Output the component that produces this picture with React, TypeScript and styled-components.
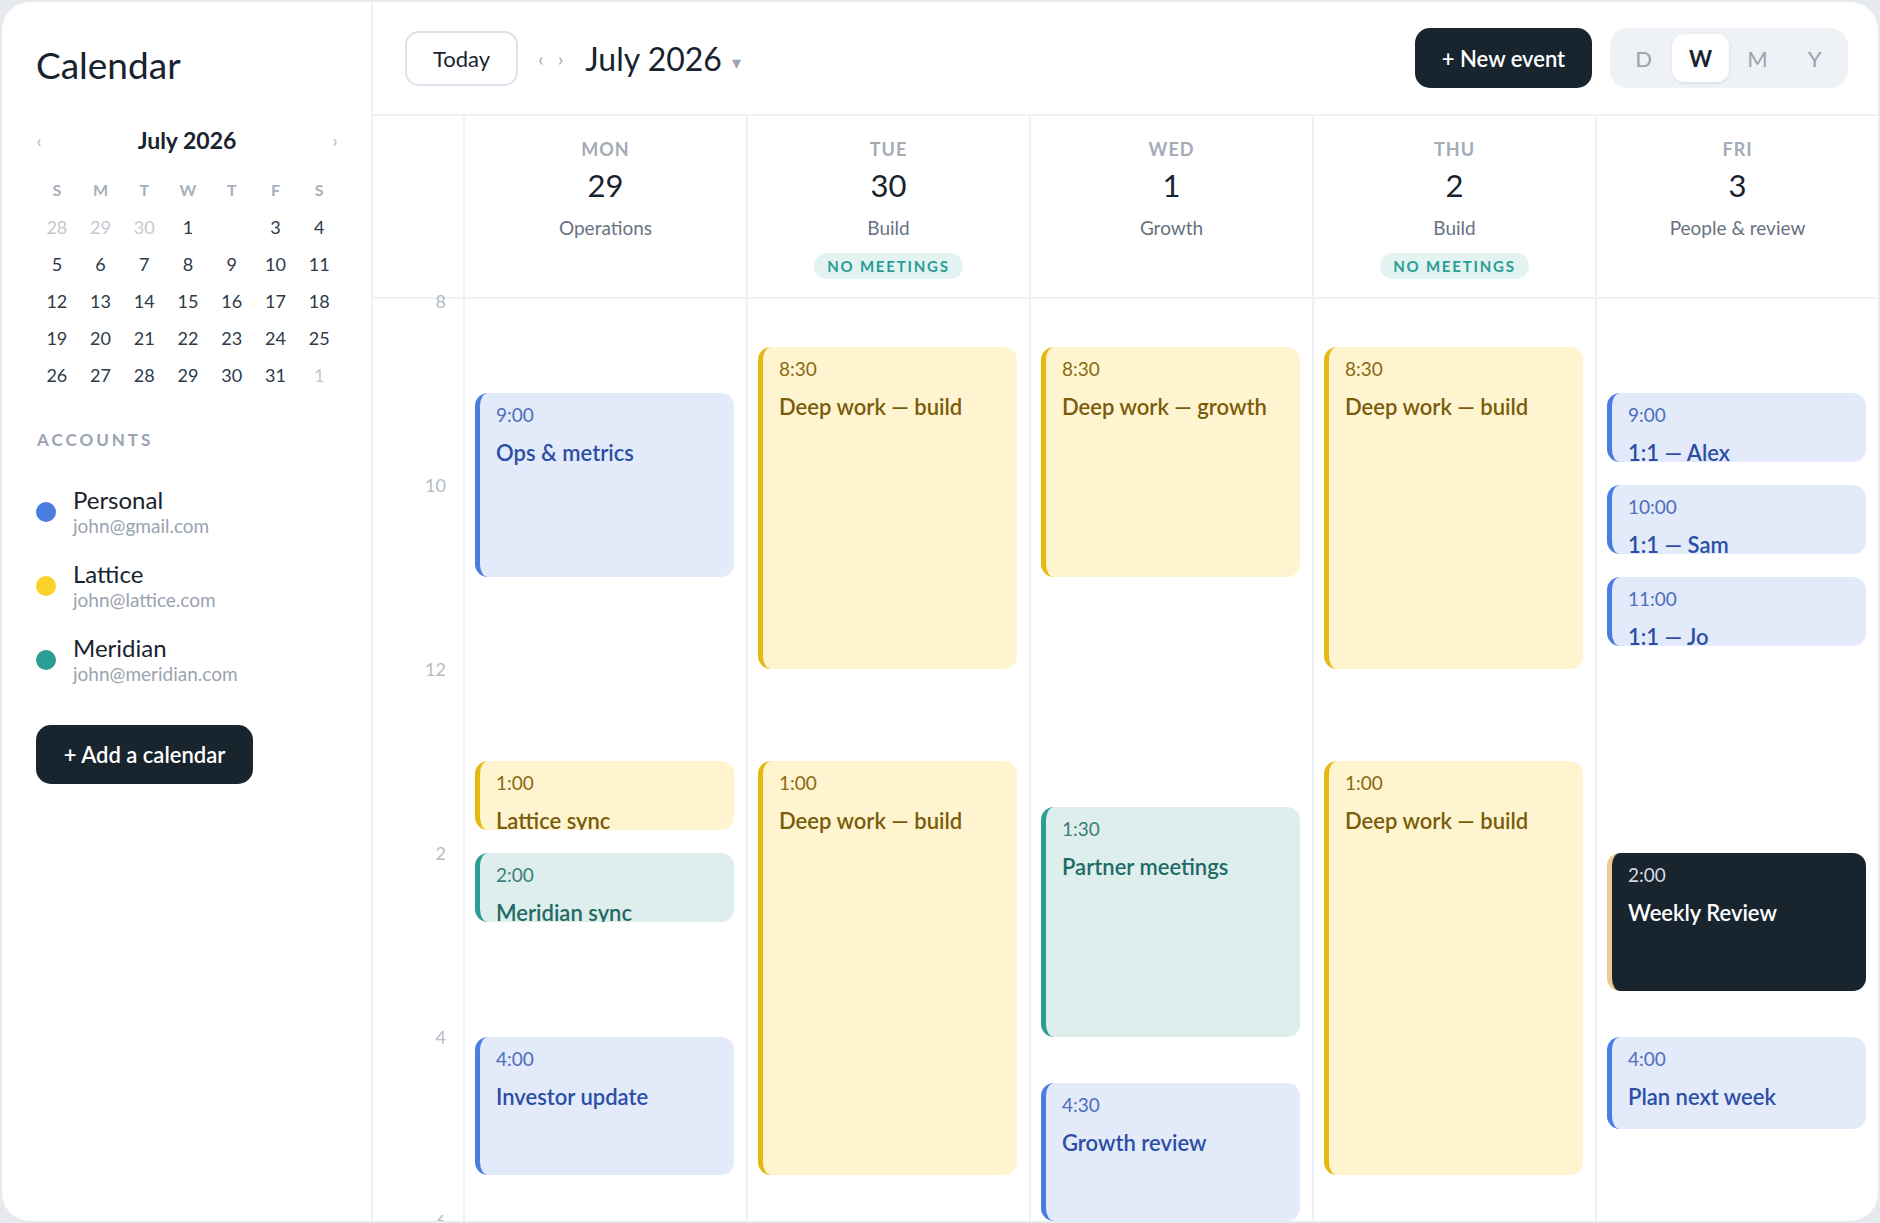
import React from "react";
import styled, { createGlobalStyle } from "styled-components";

const HOUR = 92;
const FIRST_HOUR = 8;

const GlobalStyle = createGlobalStyle`
  html, body {
    margin: 0;
    padding: 0;
    background: #e6eaef;
    font-family: "Lato", "Noto Sans", sans-serif;
    color: #1a2530;
  }
  * { box-sizing: border-box; }
`;

type Tone = "blue" | "yellow" | "teal" | "dark";

const tones: Record<Tone, { bg: string; stripe: string; time: string; title: string }> = {
  blue: { bg: "#e3eafa", stripe: "#4a7de0", time: "#4e6fbd", title: "#2b4fa4" },
  yellow: { bg: "#fff4d0", stripe: "#e6b812", time: "#8a6a12", title: "#7a5c0a" },
  teal: { bg: "#ddeeed", stripe: "#2a9d94", time: "#3a7f7a", title: "#1f6b66" },
  dark: { bg: "#18242e", stripe: "#f0c896", time: "#d6dbe1", title: "#ffffff" },
};

type CalEvent = { start: number; dur: number; time: string; title: string; tone: Tone };

const days: { name: string; num: string; theme: string; noMeetings?: boolean; events: CalEvent[] }[] = [
  {
    name: "MON",
    num: "29",
    theme: "Operations",
    events: [
      { start: 9, dur: 2, time: "9:00", title: "Ops & metrics", tone: "blue" },
      { start: 13, dur: 0.75, time: "1:00", title: "Lattice sync", tone: "yellow" },
      { start: 14, dur: 0.75, time: "2:00", title: "Meridian sync", tone: "teal" },
      { start: 16, dur: 1.5, time: "4:00", title: "Investor update", tone: "blue" },
    ],
  },
  {
    name: "TUE",
    num: "30",
    theme: "Build",
    noMeetings: true,
    events: [
      { start: 8.5, dur: 3.5, time: "8:30", title: "Deep work — build", tone: "yellow" },
      { start: 13, dur: 4.5, time: "1:00", title: "Deep work — build", tone: "yellow" },
    ],
  },
  {
    name: "WED",
    num: "1",
    theme: "Growth",
    events: [
      { start: 8.5, dur: 2.5, time: "8:30", title: "Deep work — growth", tone: "yellow" },
      { start: 13.5, dur: 2.5, time: "1:30", title: "Partner meetings", tone: "teal" },
      { start: 16.5, dur: 1.5, time: "4:30", title: "Growth review", tone: "blue" },
    ],
  },
  {
    name: "THU",
    num: "2",
    theme: "Build",
    noMeetings: true,
    events: [
      { start: 8.5, dur: 3.5, time: "8:30", title: "Deep work — build", tone: "yellow" },
      { start: 13, dur: 4.5, time: "1:00", title: "Deep work — build", tone: "yellow" },
    ],
  },
  {
    name: "FRI",
    num: "3",
    theme: "People & review",
    events: [
      { start: 9, dur: 0.75, time: "9:00", title: "1:1 — Alex", tone: "blue" },
      { start: 10, dur: 0.75, time: "10:00", title: "1:1 — Sam", tone: "blue" },
      { start: 11, dur: 0.75, time: "11:00", title: "1:1 — Jo", tone: "blue" },
      { start: 14, dur: 1.5, time: "2:00", title: "Weekly Review", tone: "dark" },
      { start: 16, dur: 1, time: "4:00", title: "Plan next week", tone: "blue" },
    ],
  },
];

const hourLabels = [
  { h: 8, label: "8" },
  { h: 10, label: "10" },
  { h: 12, label: "12" },
  { h: 14, label: "2" },
  { h: 16, label: "4" },
  { h: 18, label: "6" },
];

type DayKind = "muted" | "normal" | "hidden";

// mini calendar cells, June 28 .. Aug 1
const miniDays: [string, DayKind][] = [
  ["28", "muted"], ["29", "muted"], ["30", "muted"], ["1", "normal"], ["2", "hidden"], ["3", "normal"], ["4", "normal"],
  ...Array.from({ length: 27 }, (_, i) => [String(i + 5), "normal"] as [string, DayKind]),
  ["1", "muted"],
];

const accounts = [
  { name: "Personal", email: "john@gmail.com", color: "#4a7de0" },
  { name: "Lattice", email: "john@lattice.com", color: "#fcd12a" },
  { name: "Meridian", email: "john@meridian.com", color: "#2a9d94" },
];

const yOf = (h: number) => 2 + (h - FIRST_HOUR) * HOUR;

const App = () => {
  return (
    <>
      <GlobalStyle />
      <SCard>
        <SSidebar>
          <SBrand>Calendar</SBrand>
          <SMiniHead>
            <SMiniArrow>‹</SMiniArrow>
            <SMiniTitle>July 2026</SMiniTitle>
            <SMiniArrow>›</SMiniArrow>
          </SMiniHead>
          <SMiniGrid>
            {["S", "M", "T", "W", "T", "F", "S"].map((d, i) => (
              <SWeekLetter key={i}>{d}</SWeekLetter>
            ))}
            {miniDays.map(([d, kind], i) => (
              <SMiniDay key={i} $kind={kind}>
                {d}
              </SMiniDay>
            ))}
          </SMiniGrid>

          <SSectionLabel>Accounts</SSectionLabel>
          <SAccountList>
            {accounts.map((a) => (
              <SAccount key={a.name}>
                <SDot $color={a.color} />
                <div>
                  <SAccountName>{a.name}</SAccountName>
                  <SAccountEmail>{a.email}</SAccountEmail>
                </div>
              </SAccount>
            ))}
          </SAccountList>
          <SDarkButton $w={217} $h={59}>+ Add a calendar</SDarkButton>
        </SSidebar>

        <SMain>
          <SToolbar>
            <STodayButton>Today</STodayButton>
            <SNavArrows>
              <span>‹</span>
              <span>›</span>
            </SNavArrows>
            <SMonthTitle>
              July 2026 <SCaret>▾</SCaret>
            </SMonthTitle>
            <SSpacer />
            <SDarkButton $w={177} $h={60}>+ New event</SDarkButton>
            <SSegment>
              {["D", "W", "M", "Y"].map((v) => (
                <SSegmentItem key={v} $active={v === "W"}>
                  {v}
                </SSegmentItem>
              ))}
            </SSegment>
          </SToolbar>

          <SDayHeaderRow>
            <div />
            {days.map((d) => (
              <SDayHead key={d.name}>
                <SDayName>{d.name}</SDayName>
                <SDayNum>{d.num}</SDayNum>
                <SDayTheme>{d.theme}</SDayTheme>
                {d.noMeetings && <SBadge>No meetings</SBadge>}
              </SDayHead>
            ))}
          </SDayHeaderRow>

          <SBody>
            <SGutter>
              {hourLabels.map((l) => (
                <SHourLabel key={l.h} style={{ top: yOf(l.h) - 11 }}>
                  {l.label}
                </SHourLabel>
              ))}
            </SGutter>
            {days.map((d) => (
              <SDayColumn key={d.name}>
                {d.events.map((e, i) => (
                  <SEvent
                    key={i}
                    $tone={e.tone}
                    style={{ top: yOf(e.start), height: e.dur * HOUR }}
                  >
                    <SEventTime $tone={e.tone}>{e.time}</SEventTime>
                    <SEventTitle $tone={e.tone}>{e.title}</SEventTitle>
                  </SEvent>
                ))}
              </SDayColumn>
            ))}
          </SBody>
        </SMain>
      </SCard>
    </>
  );
};

const SCard = styled.div`
  margin: 2px;
  height: calc(100vh - 4px);
  background: #ffffff;
  border-radius: 28px;
  overflow: hidden;
  display: grid;
  grid-template-columns: 371px 1fr;
`;

const SSidebar = styled.aside`
  border-right: 2px solid #eef1f5;
  padding: 40px 30px 0 33px;
  display: flex;
  flex-direction: column;
  align-items: flex-start;
`;

const SBrand = styled.h1`
  margin: 0 0 0 1px;
  font-size: 37px;
  line-height: 46px;
  font-weight: 400;
  color: #18232e;
`;

const SMiniHead = styled.div`
  margin-top: 38px;
  width: 100%;
  display: flex;
  align-items: center;
  justify-content: space-between;
  padding: 0 2px 0 0;
`;

const SMiniTitle = styled.div`
  font-size: 23px;
  line-height: 28px;
  font-weight: 700;
  color: #18232e;
`;

const SMiniArrow = styled.span`
  font-size: 18px;
  color: #a8b0bb;
  width: 8px;
  text-align: center;
`;

const SMiniGrid = styled.div`
  margin-top: 17px;
  width: 100%;
  display: grid;
  grid-template-columns: repeat(7, 1fr);
  grid-template-rows: 36px;
  grid-auto-rows: 37px;
  align-items: center;
  justify-items: center;
`;

const SWeekLetter = styled.div`
  font-size: 16px;
  font-weight: 700;
  color: #a8b0bb;
`;

const SMiniDay = styled.div<{ $kind: DayKind }>`
  font-size: 18px;
  margin-top: 3px;
  color: ${(p) => (p.$kind === "muted" ? "#c3c9d1" : p.$kind === "hidden" ? "#ffffff" : "#2e3a48")};
`;

const SSectionLabel = styled.div`
  margin-top: 38px;
  margin-left: 2px;
  font-size: 17px;
  line-height: 20px;
  font-weight: 700;
  letter-spacing: 3px;
  text-transform: uppercase;
  color: #9aa3af;
`;

const SAccountList = styled.div`
  margin-top: 36px;
  display: flex;
  flex-direction: column;
  gap: 23px;
`;

const SAccount = styled.div`
  display: flex;
  align-items: center;
  gap: 17px;
  padding-left: 1px;
`;

const SDot = styled.span<{ $color: string }>`
  width: 20px;
  height: 20px;
  border-radius: 50%;
  background: ${(p) => p.$color};
  flex-shrink: 0;
`;

const SAccountName = styled.div`
  font-size: 24px;
  line-height: 28px;
  color: #18232e;
`;

const SAccountEmail = styled.div`
  margin-top: 1px;
  font-size: 19px;
  line-height: 22px;
  color: #9aa3af;
`;

const SDarkButton = styled.button<{ $w: number; $h: number }>`
  width: ${(p) => p.$w}px;
  height: ${(p) => p.$h}px;
  border: none;
  border-radius: 15px;
  background: #18242e;
  color: #ffffff;
  font-family: inherit;
  font-size: 22px;
  font-weight: 600;
  flex-shrink: 0;
  ${SSidebar} & {
    margin-top: 40px;
    margin-left: 1px;
  }
`;

const SMain = styled.main`
  display: flex;
  flex-direction: column;
  min-width: 0;
  min-height: 0;
`;

const SToolbar = styled.div`
  height: 114px;
  flex-shrink: 0;
  display: flex;
  align-items: center;
  padding: 0 30px 0 32px;
  border-bottom: 2px solid #eef1f5;
`;

const STodayButton = styled.button`
  width: 113px;
  height: 55px;
  border: 2px solid #dde3ec;
  border-radius: 14px;
  background: #ffffff;
  font-family: inherit;
  font-size: 22px;
  color: #18232e;
`;

const SNavArrows = styled.div`
  margin-left: 20px;
  display: flex;
  gap: 14px;
  font-size: 20px;
  color: #a3abb6;
`;

const SMonthTitle = styled.div`
  margin-left: 22px;
  font-size: 32px;
  color: #18232e;
  display: flex;
  align-items: center;
  gap: 10px;
`;

const SCaret = styled.span`
  font-size: 18px;
  color: #9aa3af;
  margin-top: 8px;
`;

const SSpacer = styled.div`
  flex: 1;
`;

const SSegment = styled.div`
  margin-left: 18px;
  height: 60px;
  padding: 6px 5px;
  background: #eef1f5;
  border-radius: 18px;
  display: flex;
`;

const SSegmentItem = styled.div<{ $active?: boolean }>`
  width: 57px;
  display: flex;
  align-items: center;
  justify-content: center;
  border-radius: 12px;
  font-size: 22px;
  font-weight: ${(p) => (p.$active ? 700 : 400)};
  color: ${(p) => (p.$active ? "#18232e" : "#9aa3af")};
  background: ${(p) => (p.$active ? "#ffffff" : "transparent")};
  box-shadow: ${(p) => (p.$active ? "0 1px 3px rgba(20, 30, 40, 0.1)" : "none")};
`;

const SDayHeaderRow = styled.div`
  height: 183px;
  flex-shrink: 0;
  display: grid;
  grid-template-columns: 90px repeat(5, 1fr);
  border-bottom: 2px solid #eef1f5;
`;

const SDayHead = styled.div`
  border-left: 2px solid #eef1f5;
  display: flex;
  flex-direction: column;
  align-items: center;
  padding-top: 23px;
`;

const SDayName = styled.div`
  font-size: 18px;
  line-height: 20px;
  font-weight: 700;
  letter-spacing: 1px;
  color: #a3abb7;
`;

const SDayNum = styled.div`
  margin-top: 8px;
  font-size: 31px;
  line-height: 36px;
  color: #18232e;
`;

const SDayTheme = styled.div`
  margin-top: 14px;
  font-size: 19px;
  line-height: 22px;
  color: #687282;
`;

const SBadge = styled.div`
  margin-top: 14px;
  height: 26px;
  padding: 0 13px;
  border-radius: 13px;
  background: #e2f3f1;
  color: #2a9d94;
  font-size: 15px;
  font-weight: 700;
  letter-spacing: 1.8px;
  text-transform: uppercase;
  display: flex;
  align-items: center;
`;

const SBody = styled.div`
  flex: 1;
  min-height: 0;
  display: grid;
  grid-template-columns: 90px repeat(5, 1fr);
`;

const SGutter = styled.div`
  position: relative;
`;

const SHourLabel = styled.div`
  position: absolute;
  right: 17px;
  font-size: 18px;
  line-height: 22px;
  color: #b5bcc6;
`;

const SDayColumn = styled.div`
  position: relative;
  border-left: 2px solid #eef1f5;
`;

const SEvent = styled.div<{ $tone: Tone }>`
  position: absolute;
  left: 10px;
  right: 12px;
  overflow: hidden;
  border-radius: 13px;
  border-left: 5px solid ${(p) => tones[p.$tone].stripe};
  background: ${(p) => tones[p.$tone].bg};
  padding: 11px 14px 0 16px;
`;

const SEventTime = styled.div<{ $tone: Tone }>`
  font-size: 19px;
  line-height: 22px;
  color: ${(p) => tones[p.$tone].time};
`;

const SEventTitle = styled.div<{ $tone: Tone }>`
  margin-top: 13px;
  font-size: 22px;
  line-height: 27px;
  font-weight: 600;
  color: ${(p) => tones[p.$tone].title};
  white-space: nowrap;
`;

export default App;
